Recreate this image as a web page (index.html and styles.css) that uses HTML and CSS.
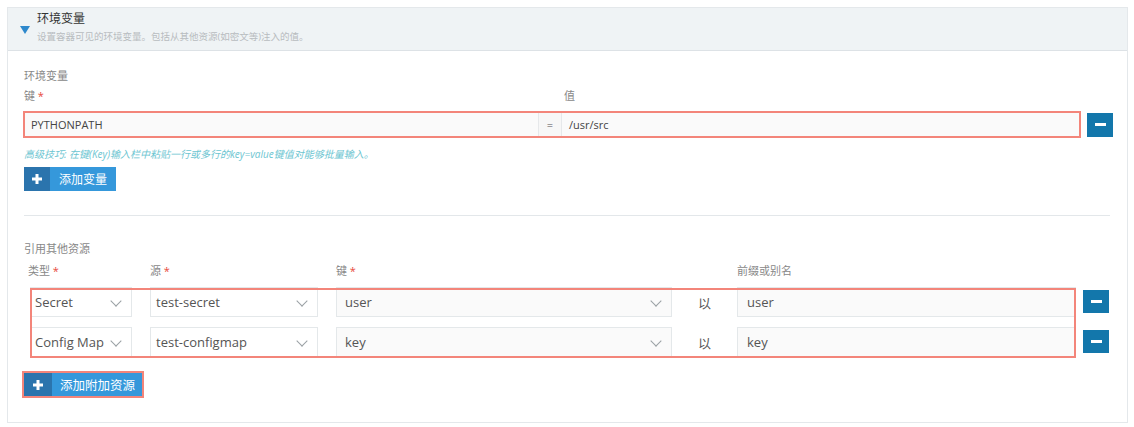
FILE: index.html
```html
<!DOCTYPE html>
<html lang="zh-CN">
<head>
<meta charset="utf-8">
<title>环境变量</title>
<link rel="stylesheet" href="styles.css">
</head>
<body>
<div class="panel">
  <div class="panel-head">
    <span class="caret"></span>
    <div class="head-text">
      <div class="title">环境变量</div>
      <div class="subtitle">设置容器可见的环境变量。包括从其他资源(如密文等)注入的值。</div>
    </div>
  </div>
  <div class="panel-body">
    <div class="section-label">环境变量</div>
    <div class="kv-labels">
      <span class="lbl-key">键 <i class="req">*</i></span>
      <span class="lbl-val">值</span>
    </div>
    <div class="kv-row">
      <div class="kv-box">
        <div class="kv-input kv-key">PYTHONPATH</div>
        <div class="kv-eq">=</div>
        <div class="kv-input kv-val">/usr/src</div>
      </div>
      <button class="btn-minus" type="button"><span class="bar"></span></button>
    </div>
    <div class="hint">高级技巧: 在键(Key)输入栏中粘贴一行或多行的key=value键值对能够批量输入。</div>
    <button class="btn-add" type="button">
      <span class="btn-icon"><svg width="12" height="12" viewBox="0 0 12 12"><path d="M6 1v10M1 6h10" stroke="#fff" stroke-width="3"/></svg></span>
      <span class="btn-text">添加变量</span>
    </button>
    <div class="divider"></div>

    <div class="section-label ref-label">引用其他资源</div>
    <div class="ref-head">
      <span class="h-type">类型 <i class="req">*</i></span>
      <span>源 <i class="req">*</i></span>
      <span>键 <i class="req">*</i></span>
      <span></span>
      <span>前缀或别名</span>
    </div>
    <div class="ref-wrap">
      <div class="ref-group">
        <div class="ref-row">
          <div class="select">Secret<span class="chev"></span></div>
          <div class="select">test-secret<span class="chev"></span></div>
          <div class="select soft key-sel">user<span class="chev"></span></div>
          <div class="as">以</div>
          <div class="field">user</div>
        </div>
        <div class="ref-row">
          <div class="select">Config Map<span class="chev"></span></div>
          <div class="select">test-configmap<span class="chev"></span></div>
          <div class="select soft key-sel">key<span class="chev"></span></div>
          <div class="as">以</div>
          <div class="field">key</div>
        </div>
      </div>
      <div class="minus-col">
        <button class="btn-minus small" type="button"><span class="bar"></span></button>
        <button class="btn-minus small" type="button"><span class="bar"></span></button>
      </div>
    </div>
    <button class="btn-add btn-add-res" type="button">
      <span class="btn-icon"><svg width="12" height="12" viewBox="0 0 12 12"><path d="M6 1v10M1 6h10" stroke="#fff" stroke-width="3"/></svg></span>
      <span class="btn-text">添加附加资源</span>
    </button>
  </div>
</div>
</body>
</html>
```
FILE: styles.css
```css
* { box-sizing: border-box; }
body {
  margin: 7px 6px 7px 7px;
  background: #fff;
  font-family: "Open Sans", "Noto Sans CJK SC", sans-serif;
  color: #444;
}
.panel {
  border: 1px solid #e4e8eb;
}
.panel-head {
  display: flex;
  align-items: flex-start;
  height: 43px;
  padding: 3px 0 0 12px;
  background: #eff3f5;
  border-bottom: 1px solid #dde2e6;
}
.caret {
  width: 0;
  height: 0;
  margin-top: 15px;
  border-left: 5px solid transparent;
  border-right: 5px solid transparent;
  border-top: 8px solid #2e88cc;
}
.head-text { margin-left: 7px; }
.title {
  font-size: 12px;
  line-height: 15px;
  color: #333;
}
.subtitle {
  margin-top: 4px;
  font-size: 9.5px;
  line-height: 14px;
  color: #b8bcbf;
}
.panel-body {
  padding: 17px 14px 26px 16px;
}
.section-label {
  font-size: 11px;
  line-height: 16px;
  color: #888;
}
.req {
  font-style: normal;
  color: #e8483b;
}
.kv-labels {
  display: flex;
  margin-top: 4px;
  font-size: 11px;
  line-height: 16px;
  color: #888;
}
.lbl-key { width: 540px; }
.kv-row {
  display: flex;
  align-items: center;
  gap: 6px;
  margin-top: 7px;
}
.kv-box {
  flex: 1;
  display: flex;
  height: 27px;
  margin-left: -1px;
  border: 2px solid #f3857a;
  background: #fafafa;
}
.kv-input {
  display: flex;
  align-items: center;
  font-size: 11px;
  color: #444;
}
.kv-key { width: 513px; padding-left: 6px; }
.kv-eq {
  width: 24px;
  display: flex;
  align-items: center;
  justify-content: center;
  font-size: 11px;
  color: #555;
  border-left: 1px solid #e6e8ea;
  border-right: 1px solid #e6e8ea;
  background: #f7f7f7;
}
.kv-val { flex: 1; padding-left: 7px; }
.btn-minus {
  width: 26px;
  height: 24px;
  padding: 0;
  border: 0;
  background: #1377ab;
  display: flex;
  align-items: center;
  justify-content: center;
}
.btn-minus .bar {
  width: 11px;
  height: 3px;
  background: #fff;
}
.btn-minus.small { height: 23px; }
.hint {
  margin-top: 9px;
  font-size: 10px;
  line-height: 14px;
  font-style: italic;
  color: #6cc5d1;
}
.btn-add {
  display: flex;
  align-items: stretch;
  height: 24px;
  margin-top: 6px;
  padding: 0;
  border: 0;
  background: #3598db;
  font-family: inherit;
  cursor: pointer;
}
.btn-icon {
  width: 26px;
  display: flex;
  align-items: center;
  justify-content: center;
  background: #2b74ad;
}
.btn-text {
  display: flex;
  align-items: center;
  padding: 0 9px;
  font-size: 12px;
  color: #fff;
}
.divider {
  height: 1px;
  margin: 24px 3px 0 0;
  background: #e3e7ea;
}
.ref-label { margin-top: 25px; }
.ref-head,
.ref-row {
  display: grid;
  grid-template-columns: 102px 168px 336px 29px 1fr;
  column-gap: 18px;
}
.ref-head {
  margin: 6px 0 0 6px;
  width: 1046px;
  font-size: 11px;
  line-height: 16px;
  color: #888;
}
.h-type { margin-left: -2px; }
.ref-wrap {
  display: flex;
  gap: 7px;
  margin: 8px 4px 0 6px;
}
.ref-group {
  position: relative;
  flex: 1;
  display: flex;
  flex-direction: column;
  gap: 10px;
}
.ref-group::after {
  content: "";
  position: absolute;
  inset: 1px 0 -1px 0;
  border: 2px solid #f3857a;
  pointer-events: none;
}
.ref-row { height: 30px; }
.select,
.field {
  position: relative;
  display: flex;
  align-items: center;
  border: 1px solid #e4e8ea;
  background: #fff;
  font-size: 13px;
  color: #555;
  padding-left: 4px;
}
.select + .select { padding-left: 5px; }
.select.soft,
.field { background: #fafafa; }
.key-sel.select { padding-left: 8px; }
.field { padding-left: 9px; }
.chev {
  position: absolute;
  right: 11px;
  top: 9px;
  width: 8px;
  height: 8px;
  border-right: 1px solid #9aa0a4;
  border-bottom: 1px solid #9aa0a4;
  transform: rotate(45deg);
}
.as {
  display: flex;
  align-items: center;
  justify-content: center;
  font-size: 13px;
  color: #555;
}
.minus-col {
  display: flex;
  flex-direction: column;
  gap: 17px;
  padding-top: 3px;
}
.btn-add-res {
  height: 23px;
  margin-top: 16px;
  outline: 2px solid #f3857a;
}
.btn-add-res .btn-icon { width: 28px; }
.btn-add-res .btn-text { padding: 0 7px 0 8px; font-size: 12.5px; }
```
